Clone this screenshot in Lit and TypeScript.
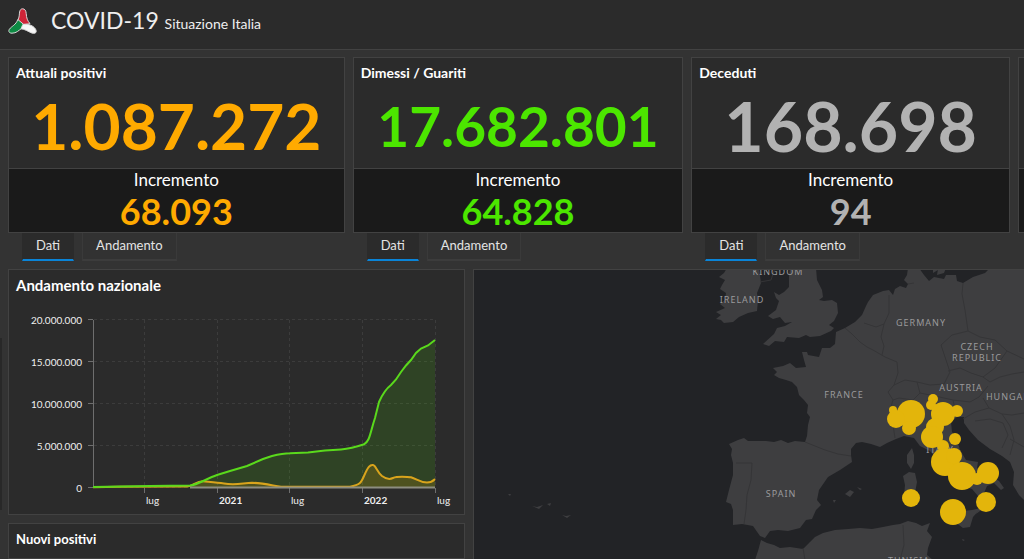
import { LitElement, html, css, svg } from "lit";
import { customElement, property, state } from "lit/decorators.js";

interface Indicator {
  title: string;
  total: string;
  increment: string;
  tone: string;
}

const INDICATORS: Indicator[] = [
  { title: "Attuali positivi", total: "1.087.272", increment: "68.093", tone: "orange" },
  { title: "Dimessi / Guariti", total: "17.682.801", increment: "64.828", tone: "green" },
  { title: "Deceduti", total: "168.698", increment: "94", tone: "gray" },
];

@customElement("indicator-card")
class IndicatorCard extends LitElement {
  @property({ attribute: false }) data!: Indicator;
  @state() private tab = "Dati";

  static styles = css`
    :host { display: block; min-width: 0; }
    .card { background: #2b2b2b; border: 1px solid #424242; display: flex; flex-direction: column; }
    .head { margin: 0; padding: 7px 7px 0; font-size: 14px; line-height: 16px; font-weight: 700; color: #fff; }
    .total { height: 87px; box-sizing: border-box; padding-top: 2px; display: flex; align-items: center; justify-content: center; font-weight: 700; white-space: nowrap; }
    .total.orange { font-size: 64px; }
    .total.green { font-size: 55px; }
    .total.gray { font-size: 68px; }
    .orange { color: #ffaa00; }
    .green { color: #4ce600; }
    .gray { color: #b2b2b2; }
    .inc { background: #1a1a1a; border-top: 1px solid #424242; height: 64px; text-align: center; box-sizing: border-box; }
    .label { font-size: 17px; line-height: 22px; color: #fff; }
    .delta { font-size: 36px; line-height: 40px; font-weight: 700; }
    .tabs { display: flex; gap: 8px; padding-left: 14px; }
    button {
      font: inherit; font-size: 13px; line-height: 16px; color: #e4e4e4; background: #323232;
      border: 1px solid #3a3a3a; border-top: 0; border-bottom: 2px solid #3c3c3c; padding: 4px 13px 6px;
    }
    button.on { background: #2b2b2b; border-color: #2b2b2b; border-bottom-color: #0a84d8; }
  `;

  render() {
    const d = this.data;
    return html`
      <section class="card">
        <h2 class="head">${d.title}</h2>
        <div class="total ${d.tone}">${d.total}</div>
        <div class="inc">
          <div class="label">Incremento</div>
          <div class="delta ${d.tone}">${d.increment}</div>
        </div>
      </section>
      <div class="tabs" role="tablist">
        ${["Dati", "Andamento"].map(
          (t) => html`<button role="tab" aria-selected=${this.tab === t ? "true" : "false"}
            class=${this.tab === t ? "on" : ""} @click=${() => (this.tab = t)}>${t}</button>`
        )}
      </div>
    `;
  }
}

const Y_TICKS = [
  { y: 320, t: "20.000.000" },
  { y: 362, t: "15.000.000" },
  { y: 404, t: "10.000.000" },
  { y: 446, t: "5.000.000" },
  { y: 488, t: "0" },
];
const X_TICKS = [
  { x: 144, t: "lug", year: false },
  { x: 217, t: "2021", year: true },
  { x: 289, t: "lug", year: false },
  { x: 362, t: "2022", year: true },
  { x: 435, t: "lug", year: false },
];
const RECOVERED =
  "M93 487L120 486.6L150 486L190 485.6C197 485 206 479 217 475L230 471L247 466L263 459L272 456C280 454 284 453.3 290 453.3L308 452.6L325 450.6L341 449.4C352 448.5 359 446 364 444.3C370 441 370 433 375 418L379 402C383 393 387 388 391 385L396 379.500L401 372L406 365.500L411 360L416 353L421 348.500L428 345.500L435 340";
const POSITIVE =
  "M93 487.300L120 486.800L188 486.400C194 485 197 481 203 481.200C210 482 217 483 224 483.400C235 485.500 243 483 252 482.800C262 483 270 485 281 486.800L350 486.800C360 485 361 483 364 476C368 467 370 464.500 373 465C376 465.500 377 472 382 476C386 479 389 480 393 478C398 476 405 477 411 477.200C417 479 420 482.500 427 482.500C432 482.500 433 481 435 479";

@customElement("trend-chart")
class TrendChart extends LitElement {
  static styles = css`
    :host { display: block; }
    svg { display: block; width: 100%; height: auto; }
    text { font-size: 10px; fill: #efefef; }
    .end { text-anchor: end; }
    .year { font-weight: 700; }
    .grid { stroke: #3c3c3c; stroke-dasharray: 3 3; }
    .axis { stroke: #6e6e6e; }
  `;

  render() {
    return html`
      <svg viewBox="9 294 455 220" role="img" aria-label="Andamento nazionale">
        ${Y_TICKS.map(
          (k) => svg`
            <line class="grid" x1="94" x2="435" y1=${k.y - 0.5} y2=${k.y - 0.5} />
            <line class="axis" x1="88" x2="93" y1=${k.y - 0.5} y2=${k.y - 0.5} />
            <text class="end" x="82" y=${k.y + 4}>${k.t}</text>`
        )}
        ${X_TICKS.map(
          (k) => svg`
            <line class="grid" x1=${k.x + 0.5} x2=${k.x + 0.5} y1="320" y2="487" />
            <line class="axis" x1=${k.x + 0.5} x2=${k.x + 0.5} y1="488" y2="493" />
            <text class=${k.year ? "year" : ""} x=${k.x + 2} y="504">${k.t}</text>`
        )}
        <path d="${RECOVERED}V487H93Z" fill="#4ce600" fill-opacity=".13" />
        <path d="${POSITIVE}V487H93Z" fill="#ffaa00" fill-opacity=".15" />
        <path class="axis" d="M93.500 320V488" fill="none" />
        <path d=${POSITIVE} fill="none" stroke="#d9a41c" stroke-width="2" />
        <path d=${RECOVERED} fill="none" stroke="#5ad91c" stroke-width="2" />
        <path d="M190 487.500H435" stroke="#8d8d80" stroke-width="2" />
      </svg>
    `;
  }
}

const LAND = [
  // Mainland Europe
  "M908 268L907 275 904 280 908 284 906 288 900 286 895 289 893 295 889 290 883 291 873 295 868 302 866 306 862 315 855 322 845 328 836 332 835 344 830 348 822 348 819 357 808 355 807 352 802 352 804 360 806 367 796 368 790 363 783 366 773 368 777 372 774 375 779 378 786 380 792 382 797 387 799 395 804 400 808 405 807 413 810 417 808 425 807 436 805 442 795 441 788 443 781 440 774 442 766 441 757 441 748 441 744 438 738 440 729 444 732 449 731 455 733 463 733 475 729 490 726 502 731 504 733 510 733 525 742 524 753 526 760 536 765 538 770 531 778 530 788 531 800 528 806 520 812 519 816 510 821 505 817 500 819 490 828 477 840 470 852 462 851 455 851 449 856 443 862 442 871 444 880 447 887 443 896 439 904 436 914 438 920 446 930 451 937 459 943 472 953 479 962 486 972 489 978 496 981 505 976 514 984 508 989 499 984 493 987 486 994 483 1001 490 1004 488 999 481 986 473 977 468 978 462 966 460 960 450 956 437 952 432 951 422 957 417 964 417 964 423 969 430 978 440 990 449 1002 456 1010 462 1014 472 1013 485 1019 495 1024 500V268H990L985 273 973 277 963 283 957 281 956 275 946 275 944 279 934 277 929 281 924 275 919 268Z",
  // Great Britain
  "M790 268L789 276 789 287 784 292 779 295 774 292 776 298 779 301 776 310 768 316 773 319 780 317 785 323 792 322 785 326 777 328 774 334 763 344 769 346 775 341 784 342 787 337 799 338 806 335 810 337 820 336 831 331 834 328 829 325 834 321 838 313 837 303 832 300 824 301 819 300 823 297 822 290 817 280 816 268Z",
  // Ireland
  "M727 268L724 273 719 277 725 280 722 285 720 289 726 293 725 300 720 304 725 308 716 312 721 315 716 319 721 320 724 323 733 322 739 317 748 313 757 311 758 300 757 293 761 283 759 268Z",
  // North Africa
  "M755 560L758 551 761 540 767 543 774 545 780 548 790 547 803 549 810 542 815 537 823 533 835 530 848 529 860 528 872 529 883 527 893 525 900 524 908 521 916 523 922 526 930 523 927 531 932 537 928 548 927 555 933 560Z",
  // Islands
  "M903 476L909 472 915 473 917 482 915 493 912 504 906 506 904 496 905 485Z",
  "M907 455L912 448 914 455 914 463 911 469 907 463Z",
  "M944 512L955 512 972 510 981 508 973 517 970 527 963 528 951 519Z",
  "M845 494L850 490 854 492 850 497Z",
  "M857 487L862 489 860 490Z",
  "M833 500L836 500 834 503Z",
  "M938 269L946 268 944 273 937 275Z",
  "M933 268L938 270 933 273Z",
  "M508 494L511 494 510 496Z",
  "M532 506L537 507 543 505 539 509Z",
  "M547 504L551 503 550 506Z",
  "M562 515L566 516 571 515 567 518Z",
  "M962 539L965 540 963 541Z",
];

const BORDERS = [
  "M805 442L815 446 825 450 838 454 851 456",
  "M736 463L752 463 751 480 747 495 746 510 744 524",
  "M845 328L852 334 860 342 867 347 873 350 885 357 897 362 898 373 894 385 888 392 893 400 890 410 893 425 895 438",
  "M864 323L876 327 884 324 889 313 889 295",
  "M884 324L881 337 884 346 882 355",
  "M894 385L905 380 917 382 930 385 944 384 950 372 941 345 952 335 968 331 965 310 962 294 963 283",
  "M908 284L914 283M968 331L980 337 995 340 1007 351 995 368 983 377 971 373 960 368 948 371",
  "M1007 351L1024 359M983 377L990 382 1000 377 1012 374 1024 372",
  "M917 382L920 393 913 400 899 398 893 400M920 393L935 396 953 400 970 402 979 397 988 386",
  "M953 400L957 417M963 419L975 412 989 408 983 398M989 408L1002 414 1012 415 1024 413",
  "M975 421L990 419 1003 423 1008 435 1002 448M1002 414L1010 426 1014 440 1010 455M1010 439L1024 447",
  "M803 548L805 560M903 525L904 545 900 560M775 268L771 280 760 282",
];

const PLACES = [
  { x: 778, y: 275, t: "KINGDOM" },
  { x: 742, y: 303, t: "IRELAND" },
  { x: 921, y: 326, t: "GERMANY" },
  { x: 977, y: 350, t: "CZECH" },
  { x: 977, y: 361, t: "REPUBLIC" },
  { x: 961, y: 391, t: "AUSTRIA" },
  { x: 1011, y: 400, t: "HUNGARY" },
  { x: 844, y: 398, t: "FRANCE" },
  { x: 781, y: 497, t: "SPAIN" },
  { x: 940, y: 453, t: "ITALY" },
  { x: 909, y: 564, t: "TUNISIA" },
];

const CASES: number[][] = [
  [911, 414, 14], [896, 419, 9], [893, 410, 4], [909, 428, 7], [933, 399, 5], [931, 405, 5],
  [943, 414, 12], [957, 411, 6], [935, 427, 9], [932, 437, 11], [955, 439, 6], [943, 446, 6],
  [945, 462, 14], [954, 456, 8], [962, 476, 14], [977, 479, 6], [988, 473, 11], [911, 498, 9],
  [986, 502, 10], [953, 512, 13],
];

@customElement("case-map")
class CaseMap extends LitElement {
  static styles = css`
    :host { display: block; min-width: 0; min-height: 0; overflow: hidden; background: #222326; }
    svg { display: block; width: 100%; height: 100%; }
    .land { fill: #3e3e40; }
    .border { fill: none; stroke: #353537; }
    text { font-family: "Noto Sans", sans-serif; font-size: 9px; letter-spacing: 1px; fill: #9a9a9c; text-anchor: middle; }
    .case { fill: #e3b50b; }
  `;

  render() {
    return html`
      <svg viewBox="474 270 550 289" preserveAspectRatio="xMaxYMin slice" role="img" aria-label="Mappa">
        ${LAND.map((d) => svg`<path class="land" d=${d} />`)}
        ${BORDERS.map((d) => svg`<path class="border" d=${d} />`)}
        ${PLACES.map((p) => svg`<text x=${p.x} y=${p.y}>${p.t}</text>`)}
        ${CASES.map((c) => svg`<circle class="case" cx=${c[0]} cy=${c[1]} r=${c[2]} />`)}
      </svg>
    `;
  }
}

@customElement("app-root")
class AppRoot extends LitElement {
  static styles = css`
    :host {
      display: flex; flex-direction: column; height: 100vh; overflow: hidden; background: #333;
      font-family: Lato, "Open Sans", sans-serif; color: #fff;
    }
    header {
      display: flex; align-items: center; gap: 14px; height: 50px; box-sizing: border-box;
      padding: 0 8px 6px; background: #2b2b2b; border-bottom: 1px solid #424242; flex: none;
    }
    .logo { width: 29px; height: 27px; flex: none; }
    h1 { margin: 0; font-size: 23px; line-height: 30px; font-weight: 400; color: #efefef; }
    h1 small { font-size: 14px; }
    .board { flex: 1; min-height: 0; display: flex; flex-direction: column; gap: 8px; padding-top: 7px; }
    .cards { display: grid; grid-template-columns: 337fr 331fr 319fr 6fr; gap: 8px; padding-left: 8px; }
    .next { display: flex; flex-direction: column; height: 176px; box-sizing: border-box; border: 1px solid #424242; border-right: 0; background: #2b2b2b; }
    .next-inc { margin-top: auto; height: 64px; box-sizing: border-box; background: #1a1a1a; border-top: 1px solid #424242; }
    .lower { flex: 1; min-height: 0; display: grid; grid-template-columns: 2px 471fr 551fr; }
    .rail { background: #282828; margin: 69px 0 49px; }
    .charts { display: flex; flex-direction: column; gap: 8px; margin: 0 8px 0 6px; min-height: 0; }
    .panel { background: #2b2b2b; border: 1px solid #424242; flex: none; }
    .last { flex: 1; }
    h2 { margin: 0; padding: 7px 7px 0; font-size: 15px; line-height: 17px; font-weight: 700; }
    .last h2 { font-size: 13px; }
    case-map { border: 1px solid #424242; border-width: 1px 0 0 1px; }
  `;

  render() {
    return html`
      <header>
        <svg class="logo" viewBox="0 0 29 27" aria-hidden="true">
          <g stroke="#d8d8d8" stroke-width="1" stroke-linejoin="round">
            <path fill="#cf2438" d="M14.500 .8C17 .8 18 2.800 18.200 5.500C18.500 10 19.500 13 22 15.600L15.500 16.800L9.800 12.500C11.500 9 11.200 6.500 11.600 4C12 2 13 .8 14.500 .8Z" />
            <path fill="#0d8a43" d="M9.800 11.500L15.800 16.500L13.500 20.500C10.500 22.500 8.500 25.200 4 25.200C1 25.200 .2 23.200 1.400 21.200C3.500 18.200 8 17 9.800 11.500Z" />
            <path fill="#f7f7f7" d="M13 20.800L14.800 16.500C19.500 15.200 27.500 18 28.200 23C28.500 25.500 25.800 25.800 23.500 24.900C20 23.400 17 21.200 13 20.800Z" />
          </g>
        </svg>
        <h1>COVID-19 <small>Situazione Italia</small></h1>
      </header>
      <main class="board">
        <div class="cards">
          ${INDICATORS.map((i) => html`<indicator-card .data=${i}></indicator-card>`)}
          <div class="next"><div class="next-inc"></div></div>
        </div>
        <div class="lower">
          <div class="rail"></div>
          <div class="charts">
            <section class="panel">
              <h2>Andamento nazionale</h2>
              <trend-chart></trend-chart>
            </section>
            <section class="panel last"><h2>Nuovi positivi</h2></section>
          </div>
          <case-map></case-map>
        </div>
      </main>
    `;
  }
}
